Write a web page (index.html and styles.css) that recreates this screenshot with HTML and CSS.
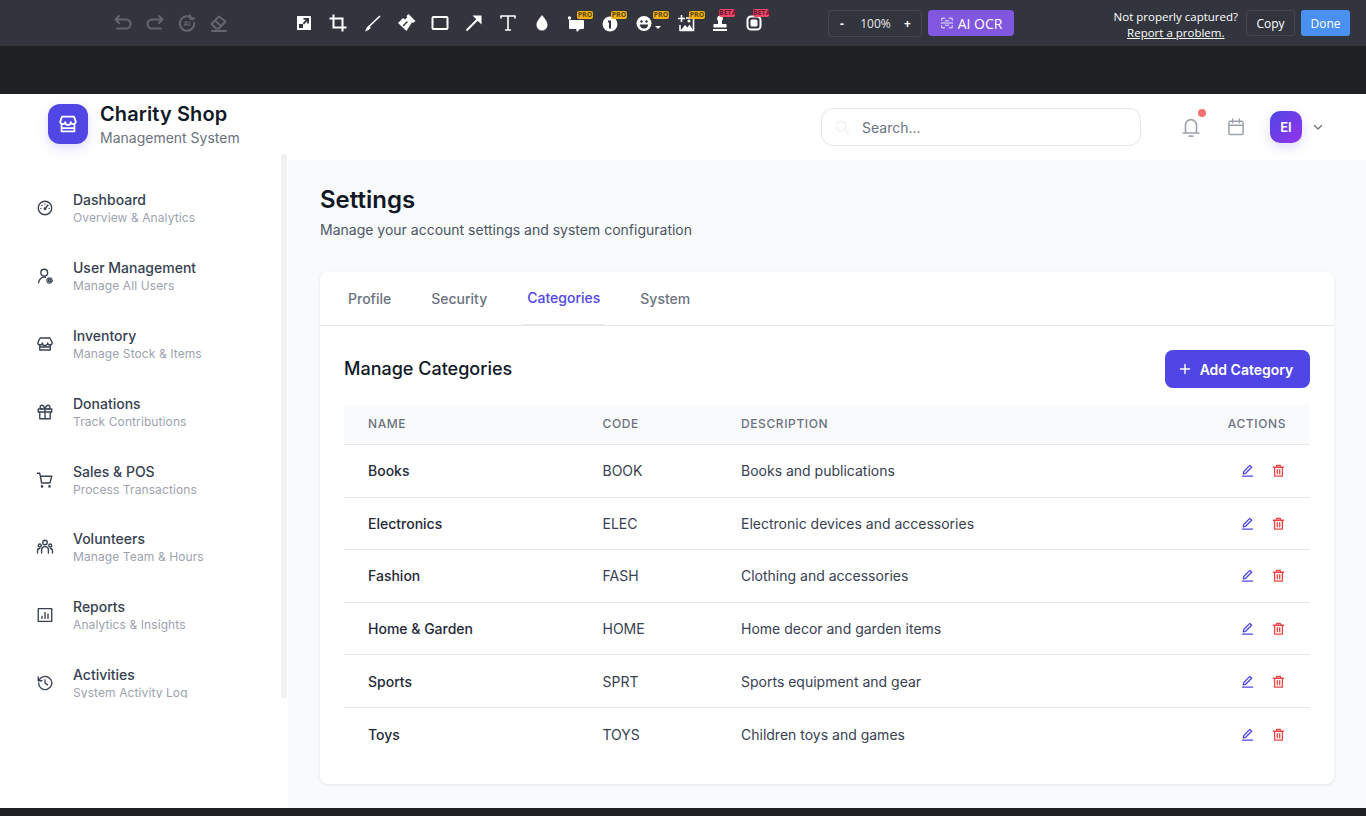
FILE: index.html
```html
<!DOCTYPE html>
<html lang="en">
<head>
    <meta charset="UTF-8">
    <meta name="viewport" content="width=device-width, initial-scale=1.0">
    <title>Charity Shop - Settings</title>
    <link rel="stylesheet" href="styles.css">
</head>
<body>
    <!-- Capture toolbar -->
    <div class="toolbar">
        <div class="history">
            <span class="tool"><svg viewBox="0 0 20 20"><path d="M6 3 2.500 6.500 6 10M3 6.500h10a4.500 4.500 0 0 1 0 9H4"/></svg></span>
            <span class="tool"><svg viewBox="0 0 20 20"><path d="M14 3l3.500 3.500L14 10M17 6.500H7a4.500 4.500 0 0 0 0 9h9"/></svg></span>
            <span class="tool"><svg viewBox="0 0 20 20"><path d="M16 6.500A7.200 7.200 0 1 0 17.200 10M13 2.500l.5 3.500 3.500-.5"/><text x="10" y="12.500" class="ai-mark">AI</text></svg></span>
            <span class="tool"><svg viewBox="0 0 20 20"><path d="M2.500 11 10 3.500l6.500 5L10 15.500H7zM6 7.500l6 5.500M3 18h14"/></svg></span>
        </div>
        <div class="tools">
            <span class="tool"><svg viewBox="0 0 20 20"><rect x="3" y="3" width="14" height="14" class="fill"/><rect x="5" y="11" width="4" height="4" class="hole"/><path d="M9.500 5H15v5.500h-1.800V8.200L10 11.500 8.700 10.300 12 6.800H9.500z" class="hole"/></svg></span>
            <span class="tool"><svg viewBox="0 0 20 20"><path d="M5.500 1.500V14.500H18.500M1.500 5.500H14.500V18.500" class="bold"/></svg></span>
            <span class="tool"><svg viewBox="0 0 20 20"><path d="M18 3 7 13.500" class="thin"/><path d="M6.500 12.500 4.500 15l-1.500 3.500 3.500-1.500 2.300-2.300z" class="fill"/></svg></span>
            <span class="tool"><svg viewBox="0 0 20 20"><path d="M12.500 1 19.500 8l-2.500 2-1-.8-5.500 8.800L2 10l5-5 2 1.500 2.300-2.300-.8-1.200z" class="fill"/><path d="M7.500 12.500l3.500-3.500" class="cut"/></svg></span>
            <span class="tool"><svg viewBox="0 0 20 20"><rect x="2.500" y="4" width="15" height="12" rx="1" class="bold"/></svg></span>
            <span class="tool"><svg viewBox="0 0 20 20"><path d="M2.500 17.500 15.500 4.500" class="bold"/><path d="M8.500 2.500h9v9z" class="fill"/></svg></span>
            <span class="tool"><svg viewBox="0 0 20 20"><path d="M3 5.500V3h14v2.500M10 3v14M7 17h6" class="thin"/></svg></span>
            <span class="tool"><svg viewBox="0 0 20 20"><path d="M10 2c3 4 5.500 6.500 5.500 10a5.500 5.500 0 0 1-11 0C4.500 8.500 7 6 10 2z" class="fill"/></svg></span>
            <span class="tool"><svg viewBox="0 0 20 20"><circle cx="3.500" cy="5" r="1.700" class="fill"/><path d="M3 7h14a1 1 0 0 1 1 1v7a1 1 0 0 1-1 1h-3l-3 3-1-3H4a1 1 0 0 1-1-1z" class="fill"/></svg><b class="badge pro">PRO</b></span>
            <span class="tool"><svg viewBox="0 0 20 20"><circle cx="10" cy="11" r="7.500" class="fill"/><path d="M8 7.500h3v8H9V9.500H8z" class="hole"/></svg><b class="badge pro">PRO</b></span>
            <span class="tool wide"><svg viewBox="0 0 20 20"><circle cx="10" cy="10.500" r="7.500" class="fill"/><circle cx="7.500" cy="8.500" r="1.200" class="hole"/><circle cx="12.500" cy="8.500" r="1.200" class="hole"/><path d="M6 11.500h8a4 4 0 0 1-8 0z" class="hole"/></svg><i class="caret"></i><b class="badge pro">PRO</b></span>
            <span class="tool"><svg viewBox="0 0 20 20"><path d="M10 5H17.500V17.500H4V12" class="thin"/><path d="M5.500 2v7M2 5.500h7" class="thin"/><path d="M5 17l4-5 2.500 2.500 2-3L17 17z" class="fill"/><circle cx="13" cy="8" r="1.500" class="fill"/></svg><b class="badge pro shifted">PRO</b></span>
            <span class="tool"><svg viewBox="0 0 20 20"><path d="M10 2.500a3 3 0 0 1 2 5.200V11h4.500v3.500h-13V11H8V7.700a3 3 0 0 1 2-5.200z" class="fill"/><rect x="3" y="16" width="14" height="2" class="fill"/></svg><b class="badge beta">BETA</b></span>
            <span class="tool"><svg viewBox="0 0 20 20"><rect x="3.500" y="3.500" width="13" height="13" rx="3.500" class="bold"/><rect x="6.500" y="6.500" width="7" height="7" rx="1.500" class="fill"/></svg><b class="badge beta">BETA</b></span>
        </div>
        <div class="zoom-box">
            <span>-</span>
            <span class="zoom-value">100%</span>
            <span>+</span>
        </div>
        <div class="ocr-btn">
            <svg viewBox="0 0 16 16"><path d="M2 5V2.500h3.500M14 5V2.500h-3.500M2 11v2.500h3.500M14 11v2.500h-3.500M1.500 8h13M6 5.500h4M6 10.500h4"/></svg>
            AI OCR
        </div>
        <div class="capture-actions">
            <div class="capture-note">
                <div>Not properly captured?</div>
                <a>Report a problem.</a>
            </div>
            <div class="copy-btn">Copy</div>
            <div class="done-btn">Done</div>
        </div>
    </div>
    <div class="band"></div>

    <div class="app">
        <header class="topbar">
            <div class="logo">
                <svg viewBox="0 0 24 24"><path d="M5.500 4h13l2 5.500a2.800 2.800 0 0 1-5.500 .5 3 3 0 0 1-6 0 2.800 2.800 0 0 1-5.500-.5zM5 13v7h14v-7M5 16.500h14"/></svg>
            </div>
            <div class="brand">
                <div class="brand-name">Charity Shop</div>
                <div class="brand-sub">Management System</div>
            </div>
            <div class="search">
                <svg viewBox="0 0 20 20"><circle cx="9" cy="9" r="6"/><path d="M14 14l4 4"/></svg>
                <span>Search...</span>
            </div>
            <div class="top-icon bell">
                <svg viewBox="0 0 24 24"><path d="M3.500 18.500h17M6 18.500V10a6 6 0 0 1 12 0v8.500M10 22h4"/></svg>
                <i class="dot"></i>
            </div>
            <div class="top-icon">
                <svg viewBox="0 0 24 24"><rect x="3.500" y="5" width="17" height="16" rx="1.500"/><path d="M3.500 10h17M8 2.500V7M16 2.500V7"/></svg>
            </div>
            <div class="avatar">EI</div>
            <svg class="chevron" viewBox="0 0 12 12"><path d="M2.500 4.500 6 8l3.500-3.500"/></svg>
        </header>

        <div class="layout">
            <aside class="sidebar">
                <nav class="nav">
                    <a class="nav-item">
                        <svg viewBox="0 0 24 24"><circle cx="12" cy="12" r="9"/><path d="M12 13l4-5M6.500 12.500h.01M8 8.500h.01M12 6.500h.01M17.500 12.500h.01"/><circle cx="12" cy="13" r="1"/></svg>
                        <div><div class="nav-title">Dashboard</div><div class="nav-sub">Overview &amp; Analytics</div></div>
                    </a>
                    <a class="nav-item">
                        <svg viewBox="0 0 24 24"><circle cx="11" cy="7.500" r="4.500"/><path d="M3.500 21a7.500 7.500 0 0 1 9-7.300"/><circle cx="18" cy="18" r="1.500"/><circle cx="18" cy="18" r="3.500" stroke-dasharray="2 1.500"/></svg>
                        <div><div class="nav-title">User Management</div><div class="nav-sub">Manage All Users</div></div>
                    </a>
                    <a class="nav-item">
                        <svg viewBox="0 0 24 24"><path d="M5.500 4h13l3 6a3 3 0 0 1-6 .5 3.500 3.500 0 0 1-7 0 3 3 0 0 1-6-.5zM5 13v7h14v-7M5 16h14"/></svg>
                        <div><div class="nav-title">Inventory</div><div class="nav-sub">Manage Stock &amp; Items</div></div>
                    </a>
                    <a class="nav-item">
                        <svg viewBox="0 0 24 24"><rect x="3" y="8" width="18" height="4"/><path d="M5 12v9h14v-9M12 8v13M12 8S10.500 3 8 3a2.500 2.500 0 0 0 0 5M12 8s1.500-5 4-5a2.500 2.500 0 0 1 0 5"/></svg>
                        <div><div class="nav-title">Donations</div><div class="nav-sub">Track Contributions</div></div>
                    </a>
                    <a class="nav-item">
                        <svg viewBox="0 0 24 24"><path d="M2 3h3l2.500 13h11L21 7H6"/><circle cx="8" cy="20.500" r=".8"/><circle cx="18" cy="20.500" r=".8"/></svg>
                        <div><div class="nav-title">Sales &amp; POS</div><div class="nav-sub">Process Transactions</div></div>
                    </a>
                    <a class="nav-item">
                        <svg viewBox="0 0 24 24"><circle cx="12" cy="6" r="3"/><circle cx="5" cy="10" r="2"/><circle cx="19" cy="10" r="2"/><path d="M7.500 20v-4a4.500 4.500 0 0 1 9 0v4M2 20v-3a3 3 0 0 1 3-3M22 20v-3a3 3 0 0 0-3-3"/></svg>
                        <div><div class="nav-title">Volunteers</div><div class="nav-sub">Manage Team &amp; Hours</div></div>
                    </a>
                    <a class="nav-item">
                        <svg viewBox="0 0 24 24"><rect x="3" y="3.500" width="18" height="17"/><path d="M8 16.500v-3M12 16.500v-8M16 16.500v-6"/></svg>
                        <div><div class="nav-title">Reports</div><div class="nav-sub">Analytics &amp; Insights</div></div>
                    </a>
                    <a class="nav-item">
                        <svg viewBox="0 0 24 24"><path d="M3.500 12a8.800 8.800 0 1 0 2.600-6.200L3 9M3 4v5h5M12 7.500V12l3.500 2.500"/></svg>
                        <div><div class="nav-title">Activities</div><div class="nav-sub">System Activity Log</div></div>
                    </a>
                </nav>
            </aside>

            <main class="main">
                <h1>Settings</h1>
                <p class="page-sub">Manage your account settings and system configuration</p>

                <section class="card">
                    <div class="tabs">
                        <a class="tab">Profile</a>
                        <a class="tab">Security</a>
                        <a class="tab active">Categories</a>
                        <a class="tab">System</a>
                    </div>
                    <div class="card-body">
                        <div class="card-head">
                            <h2>Manage Categories</h2>
                            <button class="add-btn">
                                <svg viewBox="0 0 12 12"><path d="M6 1.500v9M1.500 6h9"/></svg>
                                Add Category
                            </button>
                        </div>
                        <div class="row head">
                            <div>Name</div><div>Code</div><div>Description</div><div class="actions-head">Actions</div>
                        </div>
                        <div class="row">
                            <div class="cat-name">Books</div><div>BOOK</div><div>Books and publications</div>
                            <div class="actions"><svg class="edit" viewBox="0 0 14 14"><path d="M1.500 13h11M2.500 10.500l.5-2.500 6.500-6.500 2 2L5 10z"/></svg><svg class="trash" viewBox="0 0 14 14"><path d="M1.500 3.500h11M5 3.500V1.500h4v2M2.800 3.500v9.500h8.400V3.500M5.700 6v4.500M8.300 6v4.500"/></svg></div>
                        </div>
                        <div class="row">
                            <div class="cat-name">Electronics</div><div>ELEC</div><div>Electronic devices and accessories</div>
                            <div class="actions"><svg class="edit" viewBox="0 0 14 14"><path d="M1.500 13h11M2.500 10.500l.5-2.500 6.500-6.500 2 2L5 10z"/></svg><svg class="trash" viewBox="0 0 14 14"><path d="M1.500 3.500h11M5 3.500V1.500h4v2M2.800 3.500v9.500h8.400V3.500M5.700 6v4.500M8.300 6v4.500"/></svg></div>
                        </div>
                        <div class="row">
                            <div class="cat-name">Fashion</div><div>FASH</div><div>Clothing and accessories</div>
                            <div class="actions"><svg class="edit" viewBox="0 0 14 14"><path d="M1.500 13h11M2.500 10.500l.5-2.500 6.500-6.500 2 2L5 10z"/></svg><svg class="trash" viewBox="0 0 14 14"><path d="M1.500 3.500h11M5 3.500V1.500h4v2M2.800 3.500v9.500h8.400V3.500M5.700 6v4.500M8.300 6v4.500"/></svg></div>
                        </div>
                        <div class="row">
                            <div class="cat-name">Home &amp; Garden</div><div>HOME</div><div>Home decor and garden items</div>
                            <div class="actions"><svg class="edit" viewBox="0 0 14 14"><path d="M1.500 13h11M2.500 10.500l.5-2.500 6.500-6.500 2 2L5 10z"/></svg><svg class="trash" viewBox="0 0 14 14"><path d="M1.500 3.500h11M5 3.500V1.500h4v2M2.800 3.500v9.500h8.400V3.500M5.700 6v4.500M8.300 6v4.500"/></svg></div>
                        </div>
                        <div class="row">
                            <div class="cat-name">Sports</div><div>SPRT</div><div>Sports equipment and gear</div>
                            <div class="actions"><svg class="edit" viewBox="0 0 14 14"><path d="M1.500 13h11M2.500 10.500l.5-2.500 6.500-6.500 2 2L5 10z"/></svg><svg class="trash" viewBox="0 0 14 14"><path d="M1.500 3.500h11M5 3.500V1.500h4v2M2.800 3.500v9.500h8.400V3.500M5.700 6v4.500M8.300 6v4.500"/></svg></div>
                        </div>
                        <div class="row last">
                            <div class="cat-name">Toys</div><div>TOYS</div><div>Children toys and games</div>
                            <div class="actions"><svg class="edit" viewBox="0 0 14 14"><path d="M1.500 13h11M2.500 10.500l.5-2.500 6.500-6.500 2 2L5 10z"/></svg><svg class="trash" viewBox="0 0 14 14"><path d="M1.500 3.500h11M5 3.500V1.500h4v2M2.800 3.500v9.500h8.400V3.500M5.700 6v4.500M8.300 6v4.500"/></svg></div>
                        </div>
                    </div>
                </section>
            </main>
        </div>
    </div>
    <div class="band-bottom"></div>
</body>
</html>
```

FILE: styles.css
```css
* {
    box-sizing: border-box;
}
body {
    margin: 0;
    height: 816px;
    overflow: hidden;
    display: flex;
    flex-direction: column;
    font-family: Inter, 'Noto Sans', sans-serif;
    background: #1f2023;
    color: #111827;
}
svg {
    fill: none;
    stroke: currentColor;
    stroke-linecap: round;
    stroke-linejoin: round;
}

/* Capture toolbar */
.toolbar {
    height: 46px;
    flex: none;
    display: flex;
    align-items: center;
    background: #32353e;
    font-family: 'Open Sans', 'Noto Sans', sans-serif;
    color: #fff;
}
.history {
    display: flex;
    margin-left: 107px;
    color: #63666e;
}
.history .tool {
    width: 32px;
}
.history svg {
    stroke-width: 1.4;
}
.ai-mark {
    font-family: 'Open Sans', sans-serif;
    font-size: 6.5px;
    font-weight: 700;
    fill: #63666e;
    stroke: none;
    text-anchor: middle;
}
.tools {
    display: flex;
    margin-left: 52px;
    color: #fff;
}
.tool {
    position: relative;
    width: 34px;
    height: 32px;
    display: flex;
    align-items: center;
    justify-content: center;
}
.tool svg {
    width: 20px;
    height: 20px;
    stroke-width: 2;
}
.tool.wide {
    width: 42px;
    justify-content: flex-start;
    padding-left: 7px;
}
.tools .fill {
    fill: #fff;
    stroke: none;
}
.tools .hole {
    fill: #32353e;
    stroke: none;
}
.tools .cut {
    stroke: #32353e;
    stroke-width: 1.5;
}
.tools .bold {
    stroke-width: 2;
    stroke-linecap: butt;
    stroke-linejoin: miter;
}
.tools .thin {
    stroke-width: 1.6;
    stroke-linecap: butt;
}
.caret {
    width: 0;
    height: 0;
    margin-left: 1px;
    margin-top: 8px;
    border: 3px solid transparent;
    border-top-color: #fff;
    border-bottom: 0;
}
.badge {
    position: absolute;
    top: 4px;
    left: 18px;
    width: 16px;
    height: 8px;
    border-radius: 2px;
    font-size: 7px;
    line-height: 8px;
    font-weight: 700;
    text-align: center;
}
.tool.wide .badge {
    left: 26px;
}
.badge.shifted {
    left: 20px;
}
.badge.pro {
    background: #f2b311;
    color: #5e4708;
}
.badge.beta {
    top: 2px;
    left: 16px;
    background: #f0476a;
    color: #66142a;
}
.zoom-box {
    width: 94px;
    height: 27px;
    margin-left: 57px;
    display: flex;
    align-items: center;
    justify-content: space-between;
    padding: 0 10px 0 11px;
    border: 1px solid #44474f;
    border-radius: 3px;
    font-size: 12px;
    font-weight: 700;
}
.zoom-value {
    margin-left: 3px;
    font-weight: 400;
    color: #e8e8ea;
}
.ocr-btn {
    width: 86px;
    height: 26px;
    margin-left: 6px;
    display: flex;
    align-items: center;
    justify-content: center;
    gap: 4px;
    border-radius: 4px;
    background: #8257e0;
    font-size: 14px;
}
.ocr-btn svg {
    width: 14px;
    height: 14px;
    stroke-width: 1;
}
.capture-actions {
    margin-left: auto;
    padding-right: 16px;
    display: flex;
    align-items: center;
}
.capture-note {
    text-align: center;
    font-size: 11.500px;
    line-height: 16px;
    margin-right: 8px;
    margin-top: 4px;
}
.capture-note a {
    text-decoration: underline;
}
.copy-btn, .done-btn {
    width: 49px;
    height: 26px;
    display: flex;
    align-items: center;
    justify-content: center;
    border-radius: 3px;
    font-size: 12px;
}
.copy-btn {
    border: 1px solid #44474f;
}
.done-btn {
    margin-left: 6px;
    background: #4a90f0;
}
.band {
    height: 48px;
    flex: none;
    background: #1f2023;
}
.band-bottom {
    height: 8px;
    flex: none;
}

/* App */
.app {
    height: 714px;
    flex: none;
    display: flex;
    flex-direction: column;
    background: #fff;
    overflow: hidden;
}
.topbar {
    height: 66px;
    flex: none;
    display: flex;
    align-items: center;
    padding: 0 42px 0 48px;
}
.logo {
    width: 40px;
    height: 40px;
    margin-top: -6px;
    display: flex;
    align-items: center;
    justify-content: center;
    border-radius: 12px;
    background: #4f46e5;
    color: #fff;
    box-shadow: 0 4px 12px rgba(79, 70, 229, 0.2);
}
.logo svg {
    width: 22px;
    height: 22px;
    stroke-width: 2;
}
.brand {
    margin-left: 12px;
    margin-top: -7px;
}
.brand-name {
    font-size: 20px;
    line-height: 28px;
    font-weight: 600;
    letter-spacing: 0.1px;
    color: #111827;
}
.brand-sub {
    font-size: 14px;
    line-height: 20px;
    color: #6b7280;
}
.search {
    width: 320px;
    height: 38px;
    margin-left: auto;
    margin-right: 40px;
    display: flex;
    align-items: center;
    gap: 12px;
    padding-left: 12px;
    border: 1px solid #e5e7eb;
    border-radius: 12px;
    font-size: 14px;
    color: #6b7280;
}
.search svg {
    width: 16px;
    height: 16px;
    stroke: #f0f2f5;
    stroke-width: 2;
}
.top-icon {
    position: relative;
    width: 20px;
    height: 20px;
    margin-right: 25px;
    color: #9ca3af;
}
.top-icon svg {
    width: 20px;
    height: 20px;
    stroke-width: 1.8;
    display: block;
}
.bell svg {
    width: 22px;
    height: 22px;
    margin: -1px;
}
.dot {
    position: absolute;
    top: -8px;
    right: -5px;
    width: 8px;
    height: 8px;
    border-radius: 50%;
    background: #f87171;
}
.avatar {
    width: 32px;
    height: 32px;
    margin-left: -1px;
    display: flex;
    align-items: center;
    justify-content: center;
    border-radius: 10px;
    background: linear-gradient(135deg, #4f46e5, #9333ea);
    color: #fff;
    font-size: 13px;
    font-weight: 600;
    box-shadow: 0 4px 12px rgba(79, 70, 229, 0.2);
}
.chevron {
    width: 12px;
    height: 12px;
    margin-left: 10px;
    color: #6b7280;
    stroke-width: 1.3;
}
.layout {
    flex: 1;
    display: flex;
    min-height: 0;
}
.sidebar {
    width: 288px;
    flex: none;
    background: #fff;
}
.nav {
    position: relative;
    height: 544px;
    margin-top: -6px;
    padding: 36px 0 0 36px;
    overflow: hidden;
}
.nav::after {
    content: "";
    position: absolute;
    top: 0;
    right: 1px;
    bottom: 0;
    width: 6px;
    border-radius: 3px 3px 0 0;
    background: #f1f1f1;
}
.nav-item {
    height: 67.900px;
    display: flex;
    align-items: flex-start;
    gap: 19px;
}
.nav-item svg {
    width: 18px;
    height: 18px;
    flex: none;
    margin-top: 9px;
    color: #374151;
    stroke-width: 1.8;
}
.nav-title {
    font-size: 14px;
    line-height: 20px;
    font-weight: 500;
    color: #374151;
}
.nav-sub {
    font-size: 12px;
    line-height: 16px;
    letter-spacing: 0.1px;
    color: #9ca3af;
}
.main {
    flex: 1;
    background: #f9fafb;
    padding: 24px 32px;
}
h1 {
    margin: 0;
    font-size: 24px;
    line-height: 32px;
    font-weight: 600;
    color: #111827;
}
.page-sub {
    margin: 4px 0 0;
    font-size: 14px;
    line-height: 20px;
    color: #4b5563;
}
.card {
    height: 512px;
    margin-top: 32px;
    background: #fff;
    border-radius: 8px;
    box-shadow: 0 1px 3px rgba(0, 0, 0, 0.1);
}
.tabs {
    height: 54px;
    display: flex;
    gap: 32px;
    padding: 0 24px;
    border-bottom: 1px solid #e5e7eb;
}
.tab {
    display: flex;
    align-items: center;
    height: 53px;
    padding: 0 4px;
    font-size: 14px;
    font-weight: 500;
    color: #6b7280;
}
.tab.active {
    color: #4f46e5;
    padding-bottom: 2px;
    border-bottom: 1px solid #e5e7eb;
}
.card-body {
    padding: 24px;
}
.card-head {
    height: 38px;
    display: flex;
    align-items: center;
    justify-content: space-between;
    margin-bottom: 17px;
}
h2 {
    margin: 0;
    font-size: 18px;
    line-height: 28px;
    font-weight: 500;
    color: #111827;
}
.add-btn {
    width: 145px;
    height: 38px;
    display: flex;
    align-items: center;
    justify-content: center;
    gap: 9px;
    padding: 0 3px 0 0;
    border: 0;
    border-radius: 8px;
    background: #4f46e5;
    color: #fff;
    font-family: inherit;
    font-size: 14px;
    font-weight: 600;
}
.add-btn svg {
    width: 12px;
    height: 12px;
    stroke-width: 1.400;
}
.row {
    height: 52.600px;
    display: grid;
    grid-template-columns: 234.500px 138.500px 1fr 120px;
    align-items: center;
    padding: 0 24px;
    border-bottom: 1px solid #e5e7eb;
    font-size: 14px;
    color: #374151;
}
.row.head {
    height: 40px;
    padding-bottom: 2px;
    background: #f9fafb;
    font-size: 12px;
    font-weight: 500;
    letter-spacing: 0.05em;
    text-transform: uppercase;
    color: #6b7280;
}
.row.last {
    border-bottom: 0;
}
.cat-name {
    font-weight: 500;
    color: #1f2937;
}
.actions-head {
    text-align: right;
}
.actions {
    display: flex;
    justify-content: flex-end;
    gap: 18px;
    padding-right: 1px;
}
.actions svg {
    width: 13px;
    height: 13px;
    stroke-width: 1.400;
}
.edit {
    color: #4f46e5;
}
.trash {
    color: #ef4444;
}
```
